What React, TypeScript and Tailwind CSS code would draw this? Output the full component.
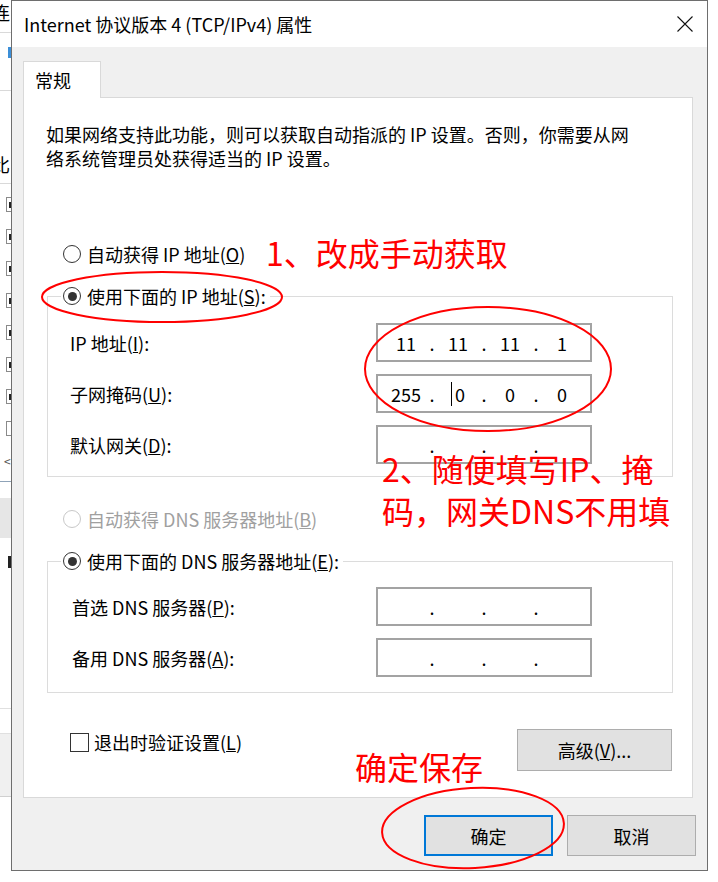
import React from "react";

const FONT = { fontFamily: '"Noto Sans CJK SC", "Noto Sans", sans-serif' };

function Radio({ checked, disabled }: { checked?: boolean; disabled?: boolean }) {
  return (
    <span
      className={`w-[18px] h-[18px] rounded-full border bg-white flex items-center justify-center shrink-0 ${
        disabled ? "border-[#c8c8c8]" : "border-[#333333]"
      }`}
    >
      {checked && <span className="w-[9px] h-[9px] rounded-full bg-[#333333]" />}
    </span>
  );
}

function IpBox({ vals, cursor }: { vals?: string[]; cursor?: boolean }) {
  const v = vals ?? ["", "", "", ""];
  return (
    <div className="w-[216px] h-[39px] border-2 border-[#a3a3a3] bg-white flex items-center pl-[10px] text-[18px] leading-[24px] text-black">
      {v.map((s, i) => (
        <React.Fragment key={i}>
          <span className="w-[36px] flex justify-center items-center">
            {cursor && i === 1 && <span className="w-px h-[24px] bg-black mr-[3px]" />}
            {s}
          </span>
          {i < 3 && <span className="w-[16px] text-center">.</span>}
        </React.Fragment>
      ))}
    </div>
  );
}

function FieldRow({ label, children, w }: { label: React.ReactNode; children: React.ReactNode; w: string }) {
  return (
    <div className="flex items-center h-[39px]">
      <div className={w}>{label}</div>
      {children}
    </div>
  );
}

function LeftStrip() {
  return (
    <div className="w-[11px] h-[882px] overflow-hidden bg-white flex flex-col shrink-0 text-[18px] leading-[22px] text-black">
      <div className="h-[32px] -ml-[8px] pt-[1px]">连</div>
      <div className="h-px bg-[#d9d9d9]" />
      <div className="h-[14px]" />
      <div className="h-[11px] w-[3px] ml-[8px] bg-[#3c8fd8]" />
      <div className="h-[32px]" />
      <div className="h-px bg-[#d9d9d9]" />
      <div className="h-[62px]" />
      <div className="h-[22px] -ml-[8px]">比</div>
      <div className="h-[8px]" />
      <div className="h-px bg-[#d9d9d9]" />
      <div className="h-[13px]" />
      {[0, 1, 2, 3, 4, 5, 6, 7].map((i) => (
        <div key={i} className="h-[32px] pl-[6px]">
          <div className="w-[14px] h-[15px] border border-[#8a8a8a] bg-white flex items-center">
            {i < 7 && <span className="w-[4px] h-[6px] ml-[2px] bg-[#222]" />}
          </div>
        </div>
      ))}
      <div className="h-[1px]" />
      <div className="h-[14px] pl-[4px] text-[12px] leading-[14px] text-[#555]">&lt;</div>
      <div className="h-[13px]" />
      <div className="h-px bg-[#8fa3b8]" />
      <div className="h-[16px]" />
      <div className="h-[40px] bg-[#e6e6e6]" />
      <div className="h-[18px]" />
      <div className="h-[12px] w-[3px] ml-[8px] bg-[#222]" />
      <div className="h-[140px]" />
      <div className="h-px bg-[#e0e0e0]" />
      <div className="h-[24px]" />
      <div className="h-px bg-[#e0e0e0]" />
      <div className="h-[62px] bg-[#f0f0f0]" />
      <div className="h-px bg-[#d0d0d0]" />
    </div>
  );
}

export default function App() {
  return (
    <div className="w-[718px] h-[882px] bg-white flex relative overflow-hidden" style={FONT}>
      <LeftStrip />
      <div className="w-[697px] h-[871px] border border-[#6e6e6e] flex flex-col shrink-0">
        {/* Title bar */}
        <div className="h-[46px] bg-white flex items-center justify-between pl-[12px] pr-[16px] shrink-0">
          <span className="text-[18px] leading-[24px] text-black">Internet 协议版本 4 (TCP/IPv4) 属性</span>
          <svg width="16" height="16" viewBox="0 0 16 16" className="mr-[-2px]">
            <path d="M0.5 0.5 L15.5 15.5 M15.5 0.5 L0.5 15.5" stroke="#111" strokeWidth="1.1" fill="none" />
          </svg>
        </div>
        {/* Body */}
        <div className="flex-1 bg-[#f0f0f0] pt-[14px] pl-[11px] pr-[11px] flex flex-col">
          <div className="w-[78px] h-[37px] bg-white border border-b-0 border-[#d9d9d9] relative z-10 -mb-px flex items-center pl-[11px] text-[18px] leading-[24px] text-black">
            常规
          </div>
          <div className="w-[670px] h-[701px] bg-white border border-[#d9d9d9] flex flex-col text-[18px] leading-[24px] text-black">
            <div className="mt-[24px] pl-[22px] w-[640px]">
              <div>如果网络支持此功能，则可以获取自动指派的 IP 设置。否则，你需要从网</div>
              <div>络系统管理员处获得适当的 IP 设置。</div>
            </div>
            {/* radio 1 */}
            <div className="mt-[72px] h-[24px] pl-[39px] flex items-center gap-[6px]">
              <Radio />
              <span>
                自动获得 IP 地址(<u>O</u>)
              </span>
            </div>
            <fieldset className="mt-[18px] ml-[23px] w-[626px] border border-[#dcdcdc]">
              <legend className="ml-[13px] pl-[2px] pr-[4px] h-[24px] flex items-center gap-[6px]">
                <Radio checked />
                <span>
                  使用下面的 IP 地址(<u>S</u>):
                </span>
              </legend>
              <div className="pl-[22px] pt-[15px] pb-[12px] flex flex-col gap-[12px]">
                <FieldRow w="w-[306px]" label={<>IP 地址(<u>I</u>):</>}>
                  <IpBox vals={["11", "11", "11", "1"]} />
                </FieldRow>
                <FieldRow w="w-[306px]" label={<>子网掩码(<u>U</u>):</>}>
                  <IpBox vals={["255", "0", "0", "0"]} cursor />
                </FieldRow>
                <FieldRow w="w-[306px]" label={<>默认网关(<u>D</u>):</>}>
                  <IpBox />
                </FieldRow>
              </div>
            </fieldset>
            {/* DNS radio 1 */}
            <div className="mt-[30px] h-[24px] pl-[39px] flex items-center gap-[6px] text-[#a0a0a0]">
              <Radio disabled />
              <span>
                自动获得 DNS 服务器地址(<u>B</u>)
              </span>
            </div>
            <fieldset className="mt-[18px] ml-[23px] w-[626px] border border-[#dcdcdc]">
              <legend className="ml-[13px] pl-[2px] pr-[4px] h-[24px] flex items-center gap-[6px]">
                <Radio checked />
                <span>
                  使用下面的 DNS 服务器地址(<u>E</u>):
                </span>
              </legend>
              <div className="pl-[24px] pt-[14px] pb-[15px] flex flex-col gap-[12px]">
                <FieldRow w="w-[304px]" label={<>首选 DNS 服务器(<u>P</u>):</>}>
                  <IpBox />
                </FieldRow>
                <FieldRow w="w-[304px]" label={<>备用 DNS 服务器(<u>A</u>):</>}>
                  <IpBox />
                </FieldRow>
              </div>
            </fieldset>
            {/* bottom row */}
            <div className="mt-[36px] pl-[46px] pr-[20px] flex justify-between items-start">
              <div className="mt-[1px] h-[24px] flex items-center gap-[5px]">
                <span className="w-[19px] h-[19px] border border-[#333333] bg-white" />
                <span>
                  退出时验证设置(<u>L</u>)
                </span>
              </div>
              <div className="w-[155px] h-[42px] bg-[#e1e1e1] border border-[#adadad] flex items-center justify-center">
                高级(<u>V</u>)...
              </div>
            </div>
          </div>
          <div className="mt-[17px] flex justify-end gap-[14px] text-[18px] leading-[24px] text-black">
            <div className="w-[129px] h-[41px] bg-[#e1e1e1] border-2 border-[#0078d7] flex items-center justify-center">
              确定
            </div>
            <div className="w-[129px] h-[41px] bg-[#e1e1e1] border border-[#adadad] flex items-center justify-center">
              取消
            </div>
          </div>
        </div>
      </div>

      {/* Annotations overlay */}
      <svg className="absolute left-0 top-0 pointer-events-none" width="718" height="882" viewBox="0 0 718 882">
        <ellipse cx="162" cy="297" rx="120" ry="25" fill="none" stroke="#ff0000" strokeWidth="2" />
        <ellipse cx="488" cy="369" rx="123" ry="62" fill="none" stroke="#ff0000" strokeWidth="2" />
        <ellipse cx="473" cy="828" rx="91" ry="40" fill="none" stroke="#ff0000" strokeWidth="2" transform="rotate(-3 473 828)" />
      </svg>
      <div className="absolute left-[266px] top-[236px] text-[32px] leading-[32px] text-[#ff0000] whitespace-nowrap">
        1、改成手动获取
      </div>
      <div className="absolute left-[382px] top-[447px] text-[32px] leading-[42px] text-[#ff0000] whitespace-nowrap">
        2、随便填写IP、掩
        <br />
        码，网关DNS不用填
      </div>
      <div className="absolute left-[355px] top-[750px] text-[32px] leading-[32px] text-[#ff0000] whitespace-nowrap">
        确定保存
      </div>
    </div>
  );
}
